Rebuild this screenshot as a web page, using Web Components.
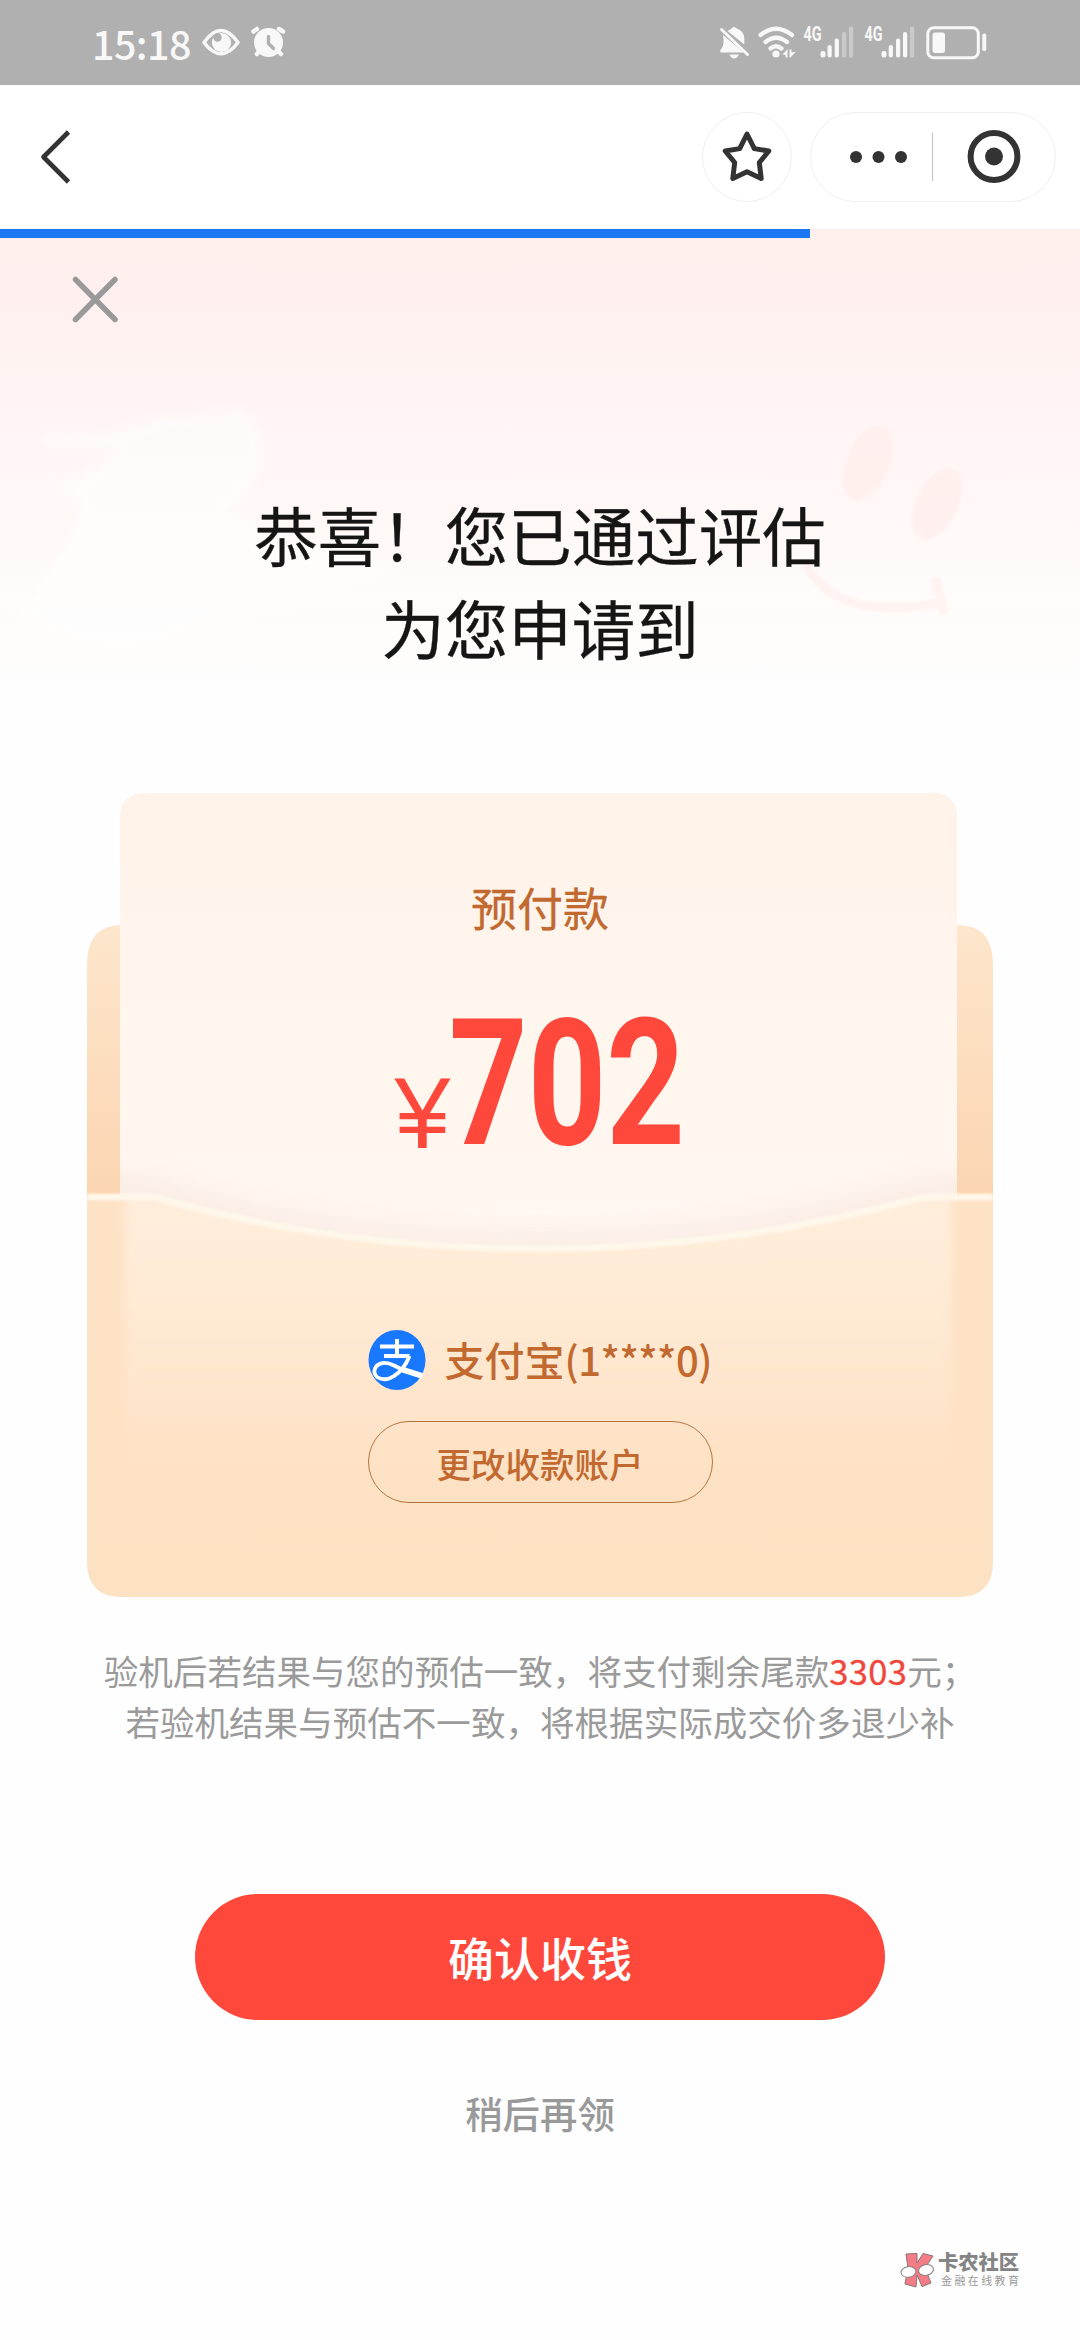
<!DOCTYPE html>
<html lang="zh-CN">
<head>
<meta charset="utf-8">
<title>预付款</title>
<style>
html, body { margin: 0; padding: 0; }
body { width: 1080px; height: 2340px; overflow: hidden; background: #fefefe; font-family: "Noto Sans CJK SC", sans-serif; }
</style>
</head>
<body>
<prepay-page></prepay-page>

<template id="t-status">
<style>
:host { display: flex; justify-content: space-between; height: 85px; background: #b0b0b0; color: #f8f8f8; box-sizing: border-box; padding: 0 93px 0 92px; }
.left { display: flex; align-items: center; gap: 10px; }
.time { font-size: 39.5px; line-height: 86px; font-weight: 500; height: 85px; width: 98px; white-space: nowrap; letter-spacing: -0.6px; }
svg { display: block; height: 85px; }
</style>
<div class="left">
  <span class="time">15:18</span>
  <svg width="88" height="85" viewBox="200 0 88 85">
    <path d="M204 42.500Q221 18.500 238 42.500Q221 65 204 42.500Z" fill="none" stroke="#f8f8f8" stroke-width="3.600" stroke-linejoin="round"/>
    <circle cx="221.500" cy="42.500" r="9.600" fill="#f8f8f8"/><circle cx="217.500" cy="37.500" r="4.200" fill="#b0b0b0"/>
    <g fill="none" stroke="#f8f8f8" stroke-width="4.500" stroke-linecap="round"><path d="M253.500 31.500L257 29M279 29L283 31.500M257 54L260 50M281 54L277 50"/></g>
    <circle cx="268.500" cy="42.500" r="14.500" fill="#f8f8f8"/>
    <path d="M268.500 36.500V43.500L273.500 48.500" fill="none" stroke="#b0b0b0" stroke-width="3.400" stroke-linecap="round" stroke-linejoin="round"/>
  </svg>
</div>
<svg class="right" width="270" height="85" viewBox="717 0 270 85">
  <g fill="#f8f8f8">
    <path d="M723 35L744 52.500H722Q719.500 52.500 720.500 50Q724 46 723.500 40Z"/>
    <path d="M729 30Q731 29.500 732 28Q734 26 736 28Q744 31 744.300 38V44.500L727.500 31Z"/>
    <path d="M729.500 54.500H739Q737 58.500 734.300 58.500Q731 58.500 729.500 54.500Z"/>
  </g>
  <path d="M721.500 29.500L747.500 54.500" stroke="#f8f8f8" stroke-width="3" stroke-linecap="round"/>
  <g fill="none" stroke="#f8f8f8" stroke-width="4.200" stroke-linecap="round"><path d="M760.500 35Q776 22.500 792 35M765.500 42Q776 33.500 787 42M770.500 48.500Q776 44 781.500 48.500"/></g>
  <circle cx="776" cy="54" r="3.600" fill="#f8f8f8"/>
  <path d="M782.500 54.500L787.500 49V57.500H785.500V55ZM789.500 57.500V49.500H791.500V52.500L796 51.500L790.500 57.500Z" fill="#f8f8f8"/>
  <g font-family="Roboto, sans-serif" font-weight="700" font-size="20" fill="#f8f8f8"><text x="803.500" y="41" textLength="18" lengthAdjust="spacingAndGlyphs">4G</text><text x="864.500" y="41" textLength="18" lengthAdjust="spacingAndGlyphs">4G</text></g>
  <g fill="#f8f8f8"><rect x="820.500" y="51" width="5" height="6.500" rx="2.200"/><rect x="827.500" y="45" width="4.200" height="12.500" rx="2"/><rect x="834.700" y="38.500" width="4.200" height="19" rx="2"/>
  <rect x="881.500" y="51" width="5" height="6.500" rx="2.200"/><rect x="888.700" y="45" width="4.200" height="12.500" rx="2"/><rect x="896" y="38.500" width="4.200" height="19" rx="2"/><rect x="903" y="32" width="4.200" height="25.500" rx="2"/></g>
  <g fill="#cacaca"><rect x="842" y="32" width="4.200" height="25.500" rx="1.500"/><rect x="849" y="26.500" width="4.200" height="31" rx="1.500"/><rect x="910" y="26.500" width="4.200" height="31" rx="1.500"/></g>
  <rect x="927.800" y="27.800" width="50.500" height="30" rx="6" fill="none" stroke="#f8f8f8" stroke-width="3"/>
  <rect x="932.500" y="32.500" width="12.500" height="20.500" rx="2.500" fill="#f8f8f8"/>
  <rect x="982.300" y="33.500" width="4" height="17.500" rx="1.800" fill="#f8f8f8"/>
</svg>
</template>

<template id="t-nav">
<style>
:host { display: block; }
.bar { height: 144px; box-sizing: border-box; padding: 0 24px 0 39px; display: flex; align-items: center; background: #fff; }
.spacer { flex: 1; }
.round, .capsule { box-sizing: border-box; height: 90px; border: 1.500px solid #efefef; border-radius: 45px; display: flex; align-items: center; justify-content: center; }
.round { width: 90px; margin-right: 18px; }
.capsule { width: 246px; }
svg { display: block; flex: none; }
</style>
<div class="bar">
  <svg width="34" height="54" viewBox="38 130 34 54"><path d="M67.500 132L42.500 157L67.500 182" fill="none" stroke="#333" stroke-width="4.600" stroke-linejoin="round"/></svg>
  <span class="spacer"></span>
  <div class="round"><svg width="60" height="60" viewBox="717 127 60 60"><path d="M747 134L754.300 148.600L768.800 151L759.300 162.500L761.200 178.500L747 171.700L732.800 178.500L734.700 162.500L725.200 151L739.700 148.600Z" fill="none" stroke="#333" stroke-width="5" stroke-linejoin="round"/></svg></div>
  <div class="capsule"><svg width="242" height="86" viewBox="812 114 242 86"><g fill="#333"><circle cx="856" cy="157" r="6"/><circle cx="878.500" cy="157" r="6"/><circle cx="901" cy="157" r="6"/><circle cx="994" cy="156.500" r="9"/></g><path d="M932.500 132.500V181" stroke="#c6c6c6" stroke-width="1.200"/><circle cx="994" cy="156.500" r="23.400" fill="none" stroke="#333" stroke-width="6"/></svg></div>
</div>
</template>

<template id="t-hero">
<style>
:host { display: grid; height: 564px; background: linear-gradient(#ffeeec 0, #fff0ef 60px, #fff4f3 160px, #fff8f7 280px, #fefcfb 390px, #fefefe 470px); }
.art, .content { grid-area: 1 / 1; }
.art { display: block; }
.content { display: flex; flex-direction: column; }
.progress { width: 810px; height: 9px; background: #1b78f2; }
.close { display: block; margin: 38px 0 0 70px; }
h1 { margin: 163px 0 0; text-align: center; font-size: 63.5px; line-height: 93px; font-weight: 400; color: #151515; -webkit-text-stroke: .3px #151515; }
</style>
<svg class="art" width="1080" height="564" viewBox="0 229 1080 564">
  <defs><filter id="soft"><feGaussianBlur stdDeviation="5"/></filter><filter id="edge"><feGaussianBlur stdDeviation="1.200"/></filter></defs>
  <path filter="url(#soft)" d="M38 436Q110 438 160 418L235 411Q262 415 260 450Q256 500 225 512Q330 560 400 565Q320 600 225 614Q110 680 20 612Q80 540 78 500L50 486Q100 470 120 450L45 446Z" fill="#fff" opacity=".55"/>
  <g fill="#ffeae8" opacity=".5" filter="url(#edge)"><ellipse cx="868" cy="463" rx="22" ry="40" transform="rotate(24 868 463)"/><ellipse cx="937" cy="504" rx="21" ry="39" transform="rotate(26 937 504)"/></g>
  <g fill="none" stroke="#ffefed" stroke-width="9" opacity=".65" filter="url(#edge)"><path d="M806 565Q840 624 943 602M936 578Q937 592 945 614"/></g>
</svg>
<div class="content">
  <div class="progress"></div>
  <svg class="close" width="50" height="48" viewBox="70 276 50 48"><path d="M75.500 279.500L115 319.500M115 279.500L75.500 319.500" stroke="#999" stroke-width="5.500" stroke-linecap="round"/></svg>
  <h1><slot></slot></h1>
</div>
</template>

<template id="t-env">
<style>
:host { display: grid; width: 906px; height: 804px; margin: 0 auto 0 87px; color: #c1692f; }
.art, .content { grid-area: 1 / 1; display: block; }
.content { display: flex; flex-direction: column; align-items: center; }
.label { margin-top: 90px; font-size: 46px; line-height: 46px; -webkit-text-stroke: .3px #c1692f; }
.amount { display: block; margin-top: 79px; overflow: visible; }
.account { display: flex; align-items: center; margin: 180px 0 0 0; height: 60px; gap: 19px; width: 345px; font-size: 40px; line-height: 58px; font-weight: 500; white-space: nowrap; }
.account span { display: block; height: 60px; }
.account .mask { display: inline; letter-spacing: -0.500px; }
.account svg { display: block; flex: none; }
.change { box-sizing: border-box; width: 345px; height: 82px; margin-top: 31px; border: 1.500px solid #b5723f; border-radius: 41px; text-align: center; font-size: 34.5px; line-height: 82px; font-weight: 500; }
</style>
<svg class="art" width="906" height="804" viewBox="87 793 906 804">
  <defs>
    <linearGradient id="back" x1="0" y1="925" x2="0" y2="1197" gradientUnits="userSpaceOnUse"><stop offset="0" stop-color="#fde6cc"/><stop offset="1" stop-color="#fbd5b1"/></linearGradient>
    <linearGradient id="paper" x1="0" y1="793" x2="0" y2="1250" gradientUnits="userSpaceOnUse"><stop offset="0" stop-color="#fff2e9"/><stop offset=".5" stop-color="#fff6ed"/><stop offset="1" stop-color="#fff7f1"/></linearGradient>
    <linearGradient id="front" x1="0" y1="1197" x2="0" y2="1597" gradientUnits="userSpaceOnUse"><stop offset="0" stop-color="#fee2c5"/><stop offset="1" stop-color="#fde1c3"/></linearGradient>
    <linearGradient id="inner" x1="0" y1="1197" x2="0" y2="1500" gradientUnits="userSpaceOnUse"><stop offset="0" stop-color="#ffeddc"/><stop offset=".3" stop-color="#ffebd6"/><stop offset=".65" stop-color="#fee5cc"/><stop offset="1" stop-color="#fde2c5" stop-opacity="0"/></linearGradient>
    <clipPath id="frontClip"><path d="M87 1197H150Q158 1197 168 1201Q345 1250 545 1250Q735 1248 912 1200Q922 1197 930 1197H993V1562Q993 1597 958 1597H122Q87 1597 87 1562Z"/></clipPath>
    <clipPath id="paperClip"><rect x="120" y="793" width="837" height="470" rx="22"/></clipPath>
    <filter id="b6" x="-10%" y="-60%" width="120%" height="220%"><feGaussianBlur stdDeviation="13"/></filter>
    <filter id="b8"><feGaussianBlur stdDeviation="5"/></filter>
    <filter id="b1" x="-5%" y="-20%" width="110%" height="140%"><feGaussianBlur stdDeviation="1"/></filter>
  </defs>
  <path d="M122 925H958Q993 925 993 965V1240H87V965Q87 925 122 925Z" fill="url(#back)"/>
  <rect x="120" y="793" width="837" height="470" rx="22" fill="url(#paper)"/>
  <g clip-path="url(#paperClip)"><path d="M100 1190Q158 1193 168 1201Q345 1250 545 1250Q735 1248 912 1200Q930 1193 980 1190" fill="none" stroke="#f3ded4" stroke-width="26" opacity=".5" filter="url(#b6)"/></g>
  <g clip-path="url(#frontClip)"><rect x="87" y="1190" width="906" height="407" fill="url(#front)"/><rect x="125" y="1180" width="827" height="340" fill="url(#inner)" filter="url(#b8)"/></g>
  <path d="M87 1197H150Q158 1197 168 1201Q345 1249 545 1249Q735 1247 912 1200Q922 1197 930 1197H993" fill="none" stroke="#fff7ea" stroke-width="6.500" filter="url(#b1)"/>
</svg>
<div class="content">
  <div class="label"><slot name="label"></slot></div>
  <svg class="amount" width="288" height="142" viewBox="396 1008 288 142" fill="#ff483c">
    <text x="395" y="1147" font-family="Roboto, sans-serif" font-weight="300" font-size="95" stroke="#ff483c" stroke-width="2" textLength="55" lengthAdjust="spacingAndGlyphs">¥</text>
    <text x="449" y="1144" font-family="Roboto, sans-serif" font-weight="700" font-size="176" textLength="236" lengthAdjust="spacingAndGlyphs">702</text>
  </svg>
  <div class="account">
    <svg width="58" height="60" viewBox="0 0 58 60"><ellipse cx="29" cy="30" rx="28.500" ry="30" fill="#1878ff"/>
      <g fill="none" stroke="#fff"><path d="M12 16.500H46M16 26H41.500M29 9V26" stroke-width="4"/><path d="M41.500 26Q36 40 26 46Q17 52 9 47Q4 42 8.500 36Q15 30 26 35.500Q38 42 54 46" stroke-width="3.800"/><path d="M34 39.500L54.500 46" stroke-width="6"/></g></svg>
    <span>支付宝<span class="mask">(1****0)</span></span>
  </div>
  <div class="change">更改收款账户</div>
</div>
</template>

<template id="t-note">
<style>
:host { display: block; margin-top: 47.5px; text-align: center; font-size: 34.55px; line-height: 51px; color: #9a9a9a; white-space: nowrap; }
b { font-weight: 400; color: #f0473c; letter-spacing: .3px; -webkit-text-stroke: .3px #f0473c; }
</style>
<div>验机后若结果与您的预估一致，将支付剩余尾款<b>3303</b>元；</div>
<div>若验机结果与预估不一致，将根据实际成交价多退少补</div>
</template>

<template id="t-actions">
<style>
:host { display: flex; flex-direction: column; align-items: center; margin-top: 147.5px; }
.primary { width: 690px; height: 126px; border-radius: 63px; background: #ff483c; color: #fff; text-align: center; font-size: 46px; line-height: 125px; font-weight: 500; }
.later { margin-top: 68px; font-size: 37.4px; line-height: 50px; font-weight: 500; color: #999; }
</style>
<div class="primary"><slot name="primary"></slot></div>
<div class="later"><slot name="later"></slot></div>
</template>

<template id="t-brand">
<style>
:host { display: flex; justify-content: flex-end; margin-top: 111px; padding-right: 60px; gap: 3px; font-family: "Liberation Sans", "Noto Sans CJK SC", sans-serif; }
svg { display: block; }
.words { display: flex; flex-direction: column; width: 82px; white-space: nowrap; padding-top: 3px; }
.name { font-size: 20.3px; line-height: 23px; font-weight: 900; color: #858585; }
.sub { font-size: 11px; line-height: 13px; letter-spacing: 2.4px; color: #999; padding-left: 3px; }
</style>
<svg width="35" height="40" viewBox="900 2249 35 40">
  <path d="M906 2254L917 2253.500V2263L923 2253.500L933 2256L925 2268L931 2283L922 2286.500L917 2275L916 2287L905 2284L908 2268Z" fill="#f47c86" stroke="#8a7474" stroke-width="1"/>
  <g fill="#fff" stroke="#8c8080" stroke-width="1"><ellipse cx="908.500" cy="2272" rx="7.500" ry="5.300" transform="rotate(-8 908 2272)"/><ellipse cx="926" cy="2270" rx="7.500" ry="5.300" transform="rotate(-12 926 2270)"/></g>
</svg>
<div class="words"><span class="name">卡农社区</span><span class="sub">金融在线教育</span></div>
</template>

<template id="t-page">
<style>:host { display: flex; flex-direction: column; width: 1080px; height: 2340px; }</style>
<status-bar></status-bar>
<nav-bar></nav-bar>
<result-hero>恭喜！您已通过评估<br>为您申请到</result-hero>
<cash-envelope><span slot="label">预付款</span></cash-envelope>
<payment-note></payment-note>
<page-actions><span slot="primary">确认收钱</span><span slot="later">稍后再领</span></page-actions>
<brand-mark></brand-mark>
</template>

<script>
class TemplateElement extends HTMLElement {
  constructor() {
    super();
    const source = document.getElementById(this.constructor.template);
    this.attachShadow({ mode: "open" }).appendChild(source.content.cloneNode(true));
  }
}
class StatusBar extends TemplateElement { static template = "t-status"; }
class NavBar extends TemplateElement { static template = "t-nav"; }
class ResultHero extends TemplateElement { static template = "t-hero"; }
class CashEnvelope extends TemplateElement { static template = "t-env"; }
class PaymentNote extends TemplateElement { static template = "t-note"; }
class PageActions extends TemplateElement { static template = "t-actions"; }
class BrandMark extends TemplateElement { static template = "t-brand"; }
class PrepayPage extends TemplateElement { static template = "t-page"; }
customElements.define("status-bar", StatusBar);
customElements.define("nav-bar", NavBar);
customElements.define("result-hero", ResultHero);
customElements.define("cash-envelope", CashEnvelope);
customElements.define("payment-note", PaymentNote);
customElements.define("page-actions", PageActions);
customElements.define("brand-mark", BrandMark);
customElements.define("prepay-page", PrepayPage);
</script>
</body>
</html>
